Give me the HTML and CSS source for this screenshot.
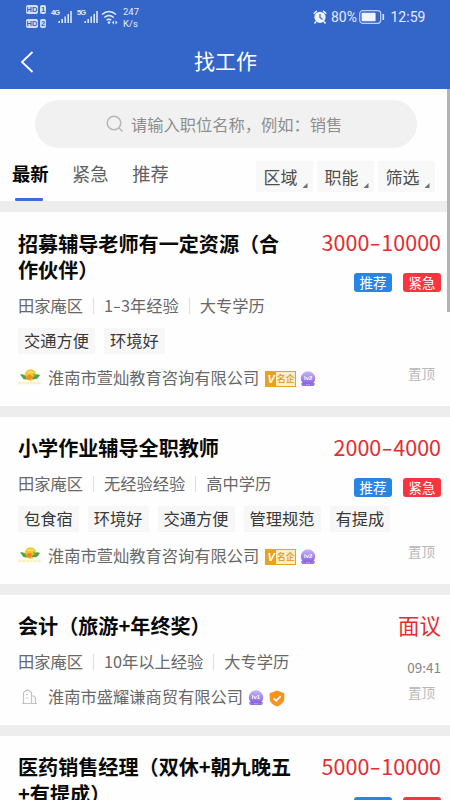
FILE: index.html
```html
<!DOCTYPE html>
<html lang="zh-CN">
<head>
<meta charset="utf-8">
<title>找工作</title>
<link rel="stylesheet" href="styles.css">
</head>
<body>
<svg width="0" height="0" class="defs">
  <defs>
    <linearGradient id="violet" x1="0" y1="0" x2="0" y2="1"><stop offset="0" stop-color="#c9b4f6"/><stop offset="1" stop-color="#8157dd"/></linearGradient>
    <symbol id="signal" viewBox="0 0 14 14"><path d="M1.2 11v2M4.2 9v4M7.2 6.5V13M10.2 4v9M13 1v12" stroke="#e4ecfa" stroke-width="1.5" fill="none"/></symbol>
    <symbol id="level" viewBox="0 0 16 16"><path d="M1 12.5l2-1h10l2 1-1.5 2.5h-11z" fill="#a98af0"/><circle cx="8" cy="7.5" r="7.2" fill="url(#violet)"/><path d="M1 12.2q7 3 14 0l-1.3 2.8H2.300z" fill="#9a75ea"/><path d="M6.500 13.500h.8M8.700 13.500h.8" stroke="#eee5ff"/></symbol>
    <symbol id="logo" viewBox="0 0 24 18"><circle cx="12.500" cy="6" r="5.800" fill="#f6c52f"/><path d="M8 4.500q4.500-4 9 0-4.500-2-9 0z" fill="#fff3a0"/><path d="M2 5.500q4-.8 5.500 1.500L9 10.500q-4 .5-5-2.500zM22 6q-3-1.500-5 .2L13.500 9.500q5 2 7-1.300z" fill="#4da545"/><path d="M8.500 7l3.500-1.500 3 2.500-3 3-3.500-1z" fill="#f08a24"/><path d="M15 4.500l3 1.500-2 2.500z" fill="#79b84c"/><path d="M.5 14h23" stroke="#f7f1bd" stroke-width="2.500" stroke-dasharray="3 .7"/></symbol>
  </defs>
</svg>

<header class="header">
  <div class="status">
    <div class="sims">
      <div class="sim"><b class="hd">HD</b><b class="num">1</b></div>
      <div class="sim"><b class="hd">HD</b><b class="num">2</b></div>
    </div>
    <span class="net">4G</span><svg class="bars"><use href="#signal"/></svg>
    <span class="net net5">5G</span><svg class="bars"><use href="#signal"/></svg>
    <svg class="wifi" viewBox="0 0 17 15"><g fill="none" stroke="#e4ecfa" stroke-width="1.5"><path d="M1 4.500q7-6 14 0M3.300 7.500q4.700-4 9.400 0M5.600 10.200q2.400-2 4.600 0"/></g><circle cx="8" cy="12.500" r="1.300" fill="#e4ecfa"/><path d="M11 12.500l2-2v4zM16.500 12.500l-2-2v4z" fill="#e4ecfa"/></svg>
    <div class="speed">247<br>K/s</div>
    <svg class="alarm" viewBox="0 0 14 14"><circle cx="7" cy="7.300" r="5.600" fill="#eef3fc"/><path d="M.8 3.700l3-2.800M13.200 3.700l-3-2.800M3 11.500l-1.500 2M11 11.500l1.500 2" stroke="#eef3fc" stroke-width="1.500"/><path d="M7 4v3.500l2.500 2" fill="none" stroke="#3465c9" stroke-width="1.200"/></svg>
    <span class="pct">80%</span>
    <svg class="battery" viewBox="0 0 26 14"><rect x=".7" y=".7" width="21" height="12.600" rx="3" fill="none" stroke="#bfd0f2" stroke-width="1.200"/><rect x="2.600" y="2.800" width="14" height="8.400" rx="1" fill="#f0f5ff"/><path d="M24.300 4v6" stroke="#dce6fa" stroke-width="1.600"/></svg>
    <span class="clock">12:59</span>
  </div>
  <div class="navbar">
    <svg class="back" viewBox="0 0 14 22"><path d="M12.500 1L2 11l10.500 10" fill="none" stroke="#fff" stroke-width="1.800"/></svg>
    <h1>找工作</h1>
  </div>
</header>

<main>
  <section class="top">
    <div class="search">
      <svg viewBox="0 0 18 18"><circle cx="8" cy="8" r="6.800" fill="none" stroke="#b7b7b7" stroke-width="1.500"/><path d="M13 13l3.500 3.500" stroke="#b7b7b7" stroke-width="1.500"/></svg>
      <span>请输入职位名称，例如：销售</span>
    </div>
    <div class="controls">
      <nav class="tabs"><a class="active">最新</a><a>紧急</a><a>推荐</a></nav>
      <div class="filters"><span>区域</span><span>职能</span><span>筛选</span></div>
    </div>
  </section>

  <article class="card">
    <div class="info">
      <h2>招募辅导老师有一定资源（合作伙伴）</h2>
      <div class="meta"><span>田家庵区</span><span>1<i>-</i>3年经验</span><span>大专学历</span></div>
      <div class="tags"><span>交通方便</span><span>环境好</span></div>
      <div class="company"><svg class="logo"><use href="#logo"/></svg><span>淮南市萱灿教育咨询有限公司</span><b class="famous"><i>V</i><em>名企</em></b><b class="level"><svg><use href="#level"/></svg><i>lv2</i></b></div>
    </div>
    <div class="side"><div class="pay">3000<i>-</i>10000</div><div class="badges"><b>推荐</b><b class="urgent">紧急</b></div><div class="pin">置顶</div></div>
  </article>

  <article class="card">
    <div class="info">
      <h2>小学作业辅导全职教师</h2>
      <div class="meta"><span>田家庵区</span><span>无经验经验</span><span>高中学历</span></div>
      <div class="tags"><span>包食宿</span><span>环境好</span><span>交通方便</span><span>管理规范</span><span>有提成</span></div>
      <div class="company"><svg class="logo"><use href="#logo"/></svg><span>淮南市萱灿教育咨询有限公司</span><b class="famous"><i>V</i><em>名企</em></b><b class="level"><svg><use href="#level"/></svg><i>lv2</i></b></div>
    </div>
    <div class="side"><div class="pay">2000<i>-</i>4000</div><div class="badges"><b>推荐</b><b class="urgent">紧急</b></div><div class="pin">置顶</div></div>
  </article>

  <article class="card">
    <div class="info">
      <h2>会计（旅游+年终奖）</h2>
      <div class="meta"><span>田家庵区</span><span>10年以上经验</span><span>大专学历</span></div>
      <div class="company"><svg class="logo" viewBox="0 0 24 18"><g fill="none" stroke="#c4c4c4" stroke-width="1.200"><path d="M5.500 15.500V4.500l3-2.300h2l3 2.300v11M13.500 8h2.500l1.500 1.500v6M4 15.500h15"/><path d="M8 6.500h2M8 10h2"/></g></svg><span>淮南市盛耀谦商贸有限公司</span><b class="level"><svg><use href="#level"/></svg><i>lv1</i></b><svg class="shield" viewBox="0 0 16 17"><path d="M8 .5l7.300 2.800v5.500q0 5-7.300 7.700Q.7 13.800.7 8.800V3.300z" fill="#f7921e"/><path d="M4.500 8.300l2.700 2.500 4.500-4.600" stroke="#fff" stroke-width="1.700" fill="none"/></svg></div>
    </div>
    <div class="side"><div class="pay">面议</div><div class="time">09:41</div><div class="pin">置顶</div></div>
  </article>

  <article class="card">
    <div class="info">
      <h2>医药销售经理（双休+朝九晚五+有提成）</h2>
    </div>
    <div class="side"><div class="pay">5000<i>-</i>10000</div><div class="badges"><b>推荐</b><b class="urgent">紧急</b></div></div>
  </article>
  <div class="scrollbar"></div>
</main>
</body>
</html>
```

FILE: styles.css
```css
* { box-sizing: border-box; }
html, body { margin: 0; height: 800px; overflow: hidden; }
body {
  width: 450px;
  background: #ededed;
  color: #686868;
  font-family: "Noto Sans CJK SC", sans-serif;
  font-size: 16.25px;
}
i, em { font-style: normal; }
svg { display: block; flex: none; }
.defs { position: absolute; }

.header { height: 89px; background: #3465c9; color: #fff; }
.status {
  display: flex;
  align-items: center;
  height: 34px;
  padding-left: 26px;
  color: #e4ecfa;
  white-space: nowrap;
}
.sims { display: grid; gap: 5px; width: 20px; margin-top: -1px; }
.sim { display: flex; gap: 2px; }
.sim b {
  height: 9px;
  border-radius: 2px;
  background: #d5e0f6;
  color: #3465c9;
  font: bold 7.5px/9px "Liberation Sans", sans-serif;
  text-align: center;
}
.hd { width: 12px; }
.num { width: 6px; }
.net { align-self: flex-start; width: 7px; margin: 9px 0 0 5px; font: bold 7.5px/8px "Liberation Sans", sans-serif; letter-spacing: -1px; }
.net5 { margin-left: 5px; }
.bars { width: 14px; height: 14px; }
.wifi { width: 17px; height: 15px; margin-left: 3px; }
.speed { width: 22px; margin: 1px 0 0 5px; font: 9.5px/12px Roboto, sans-serif; }
.alarm { width: 14px; height: 14px; margin-left: 168px; }
.pct { width: 28px; margin-left: 4px; font: 14px/20px Roboto, sans-serif; }
.battery { width: 26px; height: 14px; }
.clock { margin-left: 5.5px; font: 14px/20px Roboto, sans-serif; }
.navbar { display: grid; grid-template-columns: 20px 1fr 20px; align-items: center; height: 55px; padding: 0 20px; }
.back { width: 14px; height: 22px; }
h1 { margin: -3px 0 0 1px; font-size: 21px; line-height: 30px; font-weight: 400; text-align: center; }

main { position: relative; display: grid; gap: 11px; background: #ededed; }
.top { height: 112px; padding-top: 11px; background: #fefefe; }
.search {
  display: flex;
  align-items: center;
  width: 382px;
  height: 48px;
  margin-left: 35px;
  padding-left: 71px;
  border-radius: 24px;
  background: #f1f1f1;
  color: #8e8e8e;
}
.search svg { width: 18px; height: 18px; margin-right: 7px; }
.search span { line-height: 24px; white-space: nowrap; }
.controls { display: flex; justify-content: space-between; padding: 0 15px 0 12px; }
.tabs { display: flex; gap: 23.5px; font-size: 18.3px; line-height: 28px; padding-top: 11px; }
.tabs a { height: 42px; color: #606060; }
.tabs .active { color: #000; font-weight: 700; }
.tabs .active::after { content: ""; display: block; width: 28px; height: 3px; margin: 11px 0 0 3px; border-radius: 1px; background: #3a6ee0; }
.filters { display: flex; gap: 4px; padding-top: 13px; }
.filters span {
  display: flex;
  align-items: flex-end;
  width: 57px;
  height: 31px;
  padding-left: 7.5px;
  background: #f8f8f8;
  color: #4e4e4e;
  font-size: 17px;
  line-height: 30px;
}
.filters span::after { content: ""; width: 5px; height: 5px; margin: 0 0 4px 5px; background: #707070; clip-path: polygon(100% 0, 100% 100%, 0 100%); }

.card { display: flex; justify-content: space-between; padding: 18.5px 9px 15.5px 18px; background: #fefefe; }
.info { width: 276px; }
h2 { margin: 0; color: #0a0a0a; font-size: 20.1px; line-height: 26.5px; font-weight: 700; }
.meta { display: flex; margin-top: 9px; line-height: 24px; white-space: nowrap; }
.meta span + span::before { content: ""; display: inline-block; width: 1px; height: 16px; margin: 0 10px; background: #dedede; vertical-align: -2px; }
.meta i { display: inline-block; width: 8px; text-align: center; transform: scaleX(1.4); }
.tags { display: flex; gap: 9px; margin-top: 11px; white-space: nowrap; }
.tags span { height: 26px; padding: 0 6px; background: #f7f7f7; color: #383838; line-height: 24px; }
.company { display: flex; align-items: center; height: 24px; margin-top: 12.5px; white-space: nowrap; }
.company > span { line-height: 24px; margin-top: -2px; }
.logo { width: 24px; height: 18px; margin-right: 6px; }
.famous { display: flex; width: 31px; height: 16px; margin: 2px 0 0 6px; border: 1px solid #e9a21b; background: #fdeec8; }
.famous i { width: 10px; background: #e9a21b; color: #fff; font: italic bold 11px/14px "Liberation Sans", sans-serif; text-align: center; }
.famous em { width: 19px; color: #dd9518; font-size: 9px; line-height: 13px; font-weight: 500; text-align: center; }
.level { display: grid; width: 16px; height: 16px; margin: 2px 0 0 5px; }
.famous + .level { margin-left: 4px; }
.level svg { grid-area: 1 / 1; width: 16px; height: 16px; }
.level i { grid-area: 1 / 1; z-index: 1; color: #fff; font: bold 6px/14px "Liberation Sans", sans-serif; text-align: center; }
.shield { width: 16px; height: 17px; margin: 2px 0 0 5px; }

.side { display: flex; flex-direction: column; align-items: flex-end; width: 130px; flex: none; margin-top: -1.5px; white-space: nowrap; }
.pay { height: 44px; color: #e22d31; font-size: 21.5px; line-height: 26px; }
.pay i { display: inline-block; width: 12px; text-align: center; transform: scaleX(1.5); }
.badges { display: flex; gap: 11px; }
.badges b { width: 38px; height: 19px; border-radius: 3px; background: #2785e6; color: #fff; font-size: 13.5px; line-height: 18px; font-weight: 400; text-align: center; }
.badges .urgent { background: #f8343e; }
.time { margin-top: 1px; color: #858585; font-size: 13.5px; line-height: 20px; }
.pin { margin: auto 6px 7px 0; color: #b8b8b8; font-size: 13.5px; line-height: 20px; }
.scrollbar { position: absolute; top: 0; right: 0; width: 3px; height: 223px; background: #b3b3b3; }
```
